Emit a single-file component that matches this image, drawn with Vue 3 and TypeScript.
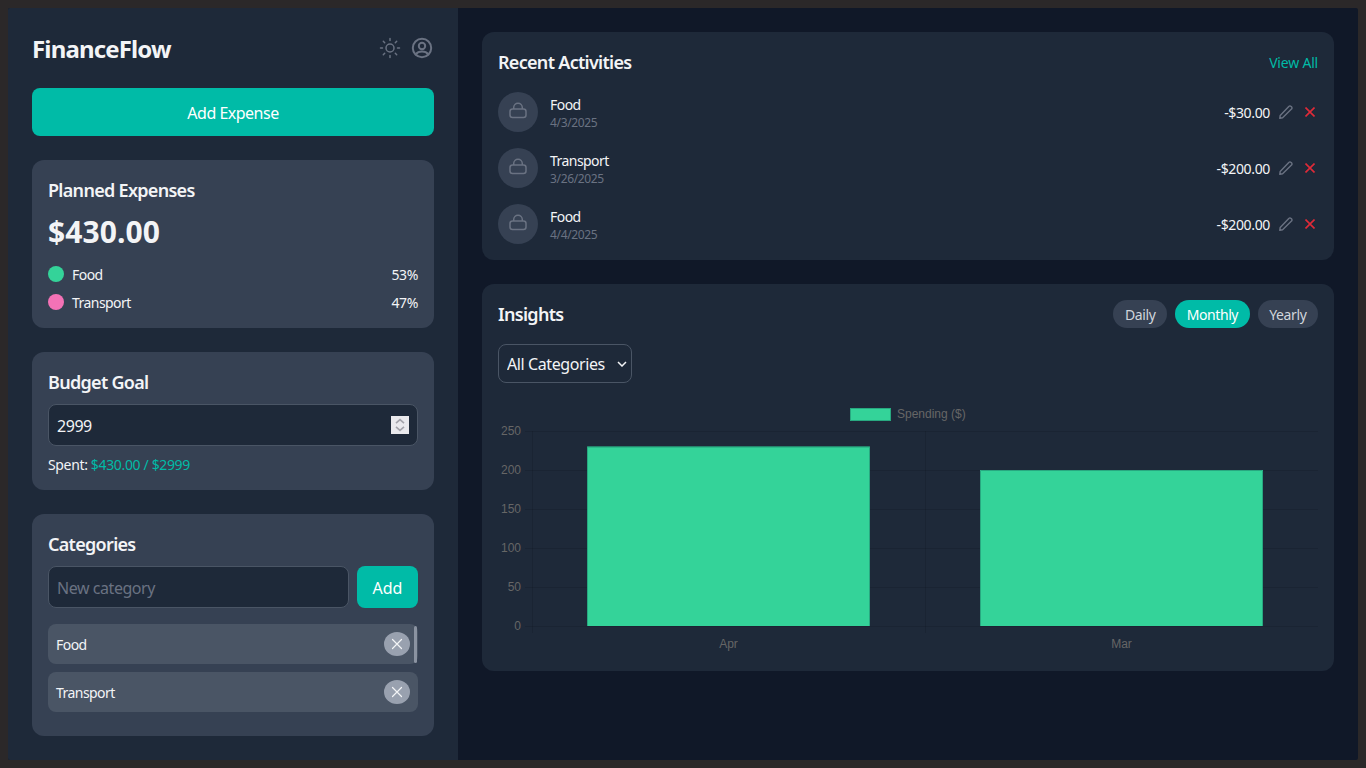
<script setup lang="ts">
import { ref } from "vue";

interface Activity {
  name: string;
  date: string;
  amount: string;
}

const activities: Activity[] = [
  { name: "Food", date: "4/3/2025", amount: "-$30.00" },
  { name: "Transport", date: "3/26/2025", amount: "-$200.00" },
  { name: "Food", date: "4/4/2025", amount: "-$200.00" },
];

const shares = [
  { name: "Food", pct: "53%", color: "#34d399" },
  { name: "Transport", pct: "47%", color: "#f472b6" },
];

const categories = ["Food", "Transport"];
const ranges = ["Daily", "Monthly", "Yearly"];
const active = ref("Monthly");
const goal = ref("2999");
const filter = ref("All Categories");

// chart geometry, origin is the top left of the canvas
const left = 34.5;
const right = 820;
const zero = 227;
const perUnit = 195 / 250;
const ticks = [0, 50, 100, 150, 200, 250];
const bars = [
  { label: "Apr", value: 230, x: 89, mid: 230.5 },
  { label: "Mar", value: 200, x: 482, mid: 623.5 },
];
const barWidth = 283;
const tickY = (v: number) => zero - v * perUnit;
</script>

<template>
  <div class="window">
    <aside class="sidebar">
      <header class="brand">
        <h1>FinanceFlow</h1>
        <div class="brand-icons">
          <svg width="24" height="24" viewBox="0 0 24 24" fill="none" stroke="currentColor" stroke-width="1.5" stroke-linecap="round">
            <circle cx="12" cy="12" r="4" />
            <path d="M12 2.5v2M12 19.5v2M2.5 12h2M19.5 12h2M5.3 5.3l1.4 1.4M17.3 17.3l1.4 1.4M5.3 18.7l1.4-1.4M17.3 6.7l1.4-1.4" />
          </svg>
          <svg width="24" height="24" viewBox="0 0 24 24" fill="none" stroke="currentColor" stroke-width="2" stroke-linecap="round">
            <circle cx="12" cy="12" r="9.2" />
            <circle cx="12" cy="10" r="3.2" />
            <path d="M5.8 18.5c1.4-2 3.5-2.9 6.2-2.9s4.8.9 6.2 2.9" />
          </svg>
        </div>
      </header>

      <button class="add-expense">Add Expense</button>

      <section class="panel">
        <h2>Planned Expenses</h2>
        <p class="total">$430.00</p>
        <ul class="shares">
          <li v-for="s in shares" :key="s.name">
            <span class="dot" :style="{ background: s.color }"></span>
            <span class="share-name">{{ s.name }}</span>
            <span>{{ s.pct }}</span>
          </li>
        </ul>
      </section>

      <section class="panel">
        <h2>Budget Goal</h2>
        <div class="goal-field">
          <input v-model="goal" class="field" type="text" />
          <span class="spinner">
            <svg width="18" height="18" viewBox="0 0 18 18" fill="none" stroke="#a3a3ab" stroke-width="1.6">
              <path d="M5 7.2l4-3.6 4 3.6M5 10.8l4 3.6 4-3.6" />
            </svg>
          </span>
        </div>
        <p class="spent">Spent: <span>$430.00 / $2999</span></p>
      </section>

      <section class="panel">
        <h2>Categories</h2>
        <div class="new-category">
          <input class="field" type="text" placeholder="New category" />
          <button class="add-category">Add</button>
        </div>
        <ul class="category-list">
          <li v-for="c in categories" :key="c">
            <span class="item-name">{{ c }}</span>
            <button class="remove" :aria-label="'Remove ' + c">
              <svg width="12" height="12" viewBox="0 0 12 12" stroke="#f3f4f6" stroke-width="1.2" stroke-linecap="round">
                <path d="M1.5 1.5l9 9M10.5 1.5l-9 9" />
              </svg>
            </button>
          </li>
          <span class="scroll-thumb"></span>
        </ul>
      </section>
    </aside>

    <main class="content">
      <section class="card">
        <div class="card-head">
          <h2>Recent Activities</h2>
          <a class="view-all">View All</a>
        </div>
        <ul class="activities">
          <li v-for="(a, i) in activities" :key="i">
            <span class="avatar">
              <svg width="20" height="20" viewBox="0 0 20 20" fill="none" stroke="#6a7282" stroke-width="1.5">
                <rect x="2" y="7" width="16" height="8.5" rx="2.5" />
                <path d="M5.7 7V5.5a4.3 4.3 0 0 1 8.6 0V7" />
              </svg>
            </span>
            <div class="activity-text">
              <span class="activity-name item-name">{{ a.name }}</span>
              <span class="activity-date">{{ a.date }}</span>
            </div>
            <span class="amount">{{ a.amount }}</span>
            <svg class="pencil" width="16" height="16" viewBox="0 0 16 16" fill="none" stroke="#6a7282" stroke-width="1.4" stroke-linejoin="round">
              <path d="M2.2 11.4L10.8 2.4a1.6 1.6 0 0 1 2.3 0l.4.4a1.6 1.6 0 0 1 0 2.3L4.6 13.8l-2.8.5z" />
            </svg>
            <svg class="cross" width="10" height="10" viewBox="0 0 10 10" stroke="#e02a38" stroke-width="1.6">
              <path d="M0.5 0.5l9 9M9.5 0.5l-9 9" />
            </svg>
          </li>
        </ul>
      </section>

      <section class="card">
        <div class="card-head">
          <h2>Insights</h2>
          <div class="ranges">
            <button v-for="r in ranges" :key="r" class="range" :class="{ on: r === active }" @click="active = r">{{ r }}</button>
          </div>
        </div>
        <div class="select-wrap">
          <select v-model="filter" class="category-select">
            <option>All Categories</option>
          </select>
          <svg class="chevron" width="10" height="6" viewBox="0 0 10 6" fill="none" stroke="#f3f4f6" stroke-width="1.5">
            <path d="M1 1l4 4 4-4" />
          </svg>
        </div>
        <svg class="chart" width="820" height="256" viewBox="0 0 820 256">
          <g stroke="#000" stroke-opacity="0.1" shape-rendering="crispEdges">
            <line v-for="t in ticks" :key="t" :x1="left - 8" :x2="right" :y1="Math.round(tickY(t)) + 0.5" :y2="Math.round(tickY(t)) + 0.5" />
            <line :x1="left" :x2="left" y1="32" y2="234" />
            <line x1="427.5" x2="427.5" y1="32" y2="234" />
          </g>
          <g v-for="b in bars" :key="b.label">
            <rect :x="b.x" :y="zero - b.value * perUnit" :width="barWidth" :height="b.value * perUnit" fill="#34d399" />
            <path :d="`M${b.x + 0.5} ${zero}V${zero - b.value * perUnit + 0.5}H${b.x + barWidth - 0.5}V${zero}`" fill="none" stroke="#28a880" />
            <text class="tick" :x="b.mid" y="249" text-anchor="middle">{{ b.label }}</text>
          </g>
          <text v-for="t in ticks" :key="'l' + t" class="tick" x="23" :y="tickY(t) + 4" text-anchor="end">{{ t }}</text>
          <rect x="352.5" y="9.5" width="40" height="12" fill="#34d399" stroke="#28a880" />
          <text class="tick" x="399" y="19">Spending ($)</text>
        </svg>
      </section>
    </main>
  </div>
</template>

<style>
html,
body {
  margin: 0;
  background: #2b2829;
}
</style>

<style scoped>
* {
  box-sizing: border-box;
}
h1,
h2,
p,
ul {
  margin: 0;
  padding: 0;
}
ul {
  list-style: none;
}
button,
input,
select {
  font-family: inherit;
}
button {
  border: 0;
  cursor: pointer;
}
.window {
  display: flex;
  height: 752px;
  margin: 8px;
  width: 1350px;
  overflow: hidden;
  border-radius: 2px;
  background: #101828;
  color: #f3f4f6;
  font-family: "Noto Sans", "Open Sans", sans-serif;
  letter-spacing: -0.35px;
}
.sidebar {
  display: flex;
  flex-direction: column;
  gap: 24px;
  width: 450px;
  padding: 24px;
  background: #1e2939;
}
.brand {
  display: flex;
  justify-content: space-between;
  align-items: center;
  height: 32px;
}
.brand h1 {
  height: 36px;
  padding-top: 1px;
  font-size: 24px;
  font-weight: 700;
  line-height: 36px;
  letter-spacing: -0.85px;
}
.brand-icons {
  display: flex;
  gap: 8px;
  color: #6a7282;
}
.brand-icons svg {
  display: block;
}
.add-expense {
  height: 48px;
  padding-top: 2px;
  border-radius: 8px;
  background: #00bba7;
  color: #fff;
  font-size: 16px;
  letter-spacing: -0.5px;
}
.panel {
  padding: 16px;
  border-radius: 12px;
  background: #364153;
}
h2 {
  height: 28px;
  font-size: 18px;
  font-weight: 600;
  line-height: 28px;
  letter-spacing: -0.7px;
  color: #f3f4f6;
}
.total {
  margin-top: 8px;
  font-size: 30px;
  font-weight: 700;
  line-height: 40px;
  letter-spacing: 0.1px;
}
.shares {
  display: flex;
  flex-direction: column;
  gap: 8px;
  margin-top: 12px;
  font-size: 14px;
}
.shares li {
  display: flex;
  align-items: center;
  height: 20px;
}
.dot {
  width: 16px;
  height: 16px;
  margin-right: 8px;
  border-radius: 50%;
}
.share-name,
.item-name {
  letter-spacing: -0.55px;
}
.share-name {
  flex: 1;
}
.goal-field {
  position: relative;
  margin-top: 8px;
}
.field {
  display: block;
  width: 100%;
  height: 42px;
  padding: 2px 8px 0;
  border: 1px solid #4a5565;
  border-radius: 8px;
  outline: none;
  background: #1e2939;
  color: #f3f4f6;
  font-size: 16px;
  letter-spacing: -0.45px;
}
.field::placeholder {
  color: #6a7282;
  opacity: 1;
}
.spinner {
  position: absolute;
  top: 12px;
  right: 9px;
  display: block;
  width: 18px;
  height: 18px;
  background: #e9e9ed;
}
.spinner svg {
  display: block;
}
.spent {
  height: 20px;
  margin-top: 8px;
  padding-top: 1px;
  font-size: 14px;
  line-height: 20px;
}
.spent span {
  color: #00bba7;
}
.new-category {
  display: flex;
  gap: 8px;
  margin-top: 8px;
}
.new-category .field {
  flex: 1;
  min-width: 0;
}
.add-category {
  width: 61px;
  height: 42px;
  padding: 2px 0 0;
  border-radius: 8px;
  background: #00bba7;
  color: #fff;
  font-size: 16px;
}
.category-list {
  position: relative;
  display: flex;
  flex-direction: column;
  gap: 8px;
  margin-top: 16px;
  margin-bottom: 8px;
  font-size: 14px;
}
.category-list li {
  display: flex;
  justify-content: space-between;
  align-items: center;
  height: 40px;
  padding: 0 8px;
  border-radius: 8px;
  background: #4a5565;
}
.remove {
  display: flex;
  justify-content: center;
  align-items: center;
  width: 26px;
  height: 24px;
  border-radius: 50%;
  background: #99a1af;
  padding: 0;
}
.scroll-thumb {
  position: absolute;
  top: 2px;
  right: 1px;
  width: 3px;
  height: 37px;
  border-radius: 2px;
  background: #8b93a1;
}
.content {
  flex: 1;
  display: flex;
  flex-direction: column;
  gap: 24px;
  padding: 24px;
}
.card {
  padding: 16px;
  border-radius: 12px;
  background: #1e2939;
}
.card-head {
  display: flex;
  justify-content: space-between;
  align-items: center;
  height: 28px;
  margin-bottom: 16px;
}
.view-all {
  color: #00bba7;
  font-size: 14px;
  letter-spacing: -0.2px;
}
.activities {
  display: flex;
  flex-direction: column;
  gap: 16px;
  font-size: 14px;
}
.activities li {
  display: flex;
  align-items: center;
  height: 40px;
}
.avatar {
  display: flex;
  justify-content: center;
  align-items: center;
  width: 40px;
  height: 40px;
  margin-right: 12px;
  border-radius: 50%;
  background: #364153;
}
.activity-text {
  flex: 1;
  display: flex;
  flex-direction: column;
  padding-top: 2px;
}
.activity-name {
  line-height: 20px;
}
.activity-date {
  color: #6a7282;
  font-size: 12px;
  line-height: 16px;
}
.pencil {
  margin-left: 8px;
}
.cross {
  margin-left: 11px;
  margin-right: 3px;
}
.ranges {
  display: flex;
  gap: 8px;
}
.range {
  height: 28px;
  padding: 0 11.6px;
  border-radius: 14px;
  background: #364153;
  color: #d1d5dc;
  font-size: 14px;
  letter-spacing: -0.4px;
}
.range.on {
  background: #00bba7;
  color: #fff;
}
.select-wrap {
  position: relative;
  width: 134px;
}
.category-select {
  appearance: none;
  display: block;
  width: 100%;
  height: 39px;
  padding: 0 8px;
  border: 1px solid #4a5565;
  border-radius: 8px;
  outline: none;
  background: #1e2939;
  color: #f3f4f6;
  font-size: 16px;
  letter-spacing: -0.4px;
}
.chevron {
  position: absolute;
  top: 17px;
  right: 5px;
  pointer-events: none;
}
.chart {
  display: block;
  margin-top: 16px;
}
.tick {
  fill: #666;
  font-family: "Liberation Sans", Arial, sans-serif;
  font-size: 12px;
  letter-spacing: 0;
}
</style>
